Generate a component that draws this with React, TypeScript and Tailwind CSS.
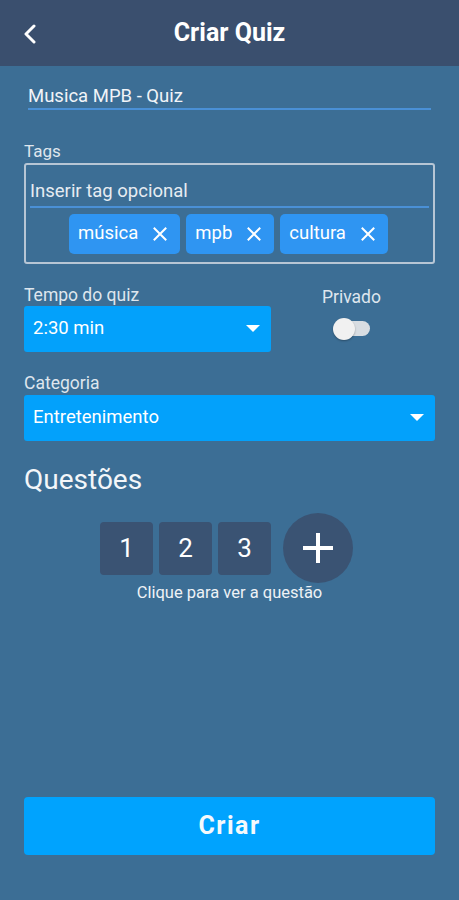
import React from "react";

function Chip({ label }: { label: string }) {
  return (
    <div className="flex h-[40px] items-center gap-[15px] rounded-[5px] bg-[#2f95f2] pl-[9px] pr-[13px] text-[18.5px] text-white">
      <span>{label}</span>
      <svg width="14" height="14" viewBox="0 0 14 14" fill="none" stroke="white" strokeWidth="2" strokeLinecap="square">
        <path d="M1.5 1.5 L12.5 12.5 M12.5 1.5 L1.5 12.5" />
      </svg>
    </div>
  );
}

function Caret() {
  return (
    <svg width="14" height="8" viewBox="0 0 14 8">
      <path d="M0 0 L14 0 L7 7 Z" fill="white" />
    </svg>
  );
}

export default function App() {
  return (
    <div className="flex min-h-[900px] w-[459px] flex-col bg-[#3c6e95] font-['Roboto',sans-serif] text-white">
      <header className="relative flex h-[66px] items-center justify-center bg-[#3a4f6e]">
        <svg className="absolute left-[23px] top-[24px]" width="14" height="20" viewBox="0 0 14 20" fill="none" stroke="white" strokeWidth="3" strokeLinecap="round" strokeLinejoin="round">
          <path d="M11 2 L3 10 L11 18" />
        </svg>
        <h1 className="text-[25px] font-bold">Criar Quiz</h1>
      </header>

      <div className="flex flex-1 flex-col px-[24px]">
        <div className="mx-[4px] mt-[19px] border-b-2 border-[#4a90d6] pb-[1px] text-[18.5px] leading-[22px] text-[#f1f4f8]">
          Musica MPB - Quiz
        </div>

        <div className="mt-[31px] text-[17px] leading-[20px] text-[#dfe6ee]">Tags</div>
        <div className="mt-[2px] h-[101px] rounded-[3px] border-2 border-[#b7c6d5] px-[4px]">
          <div className="mt-[14px] border-b-2 border-[#4a90d6] pb-[3px] text-[18.5px] leading-[24px] text-[#e6ecf2]">
            Inserir tag opcional
          </div>
          <div className="mt-[6px] flex justify-center gap-[6px] pr-[2px]">
            <Chip label="música" />
            <Chip label="mpb" />
            <Chip label="cultura" />
          </div>
        </div>

        <div className="mt-[21px] flex">
          <div className="flex w-[247px] flex-col">
            <div className="text-[17.5px] leading-[20px] text-[#dfe6ee]">Tempo do quiz</div>
            <div className="mt-[1px] flex h-[46px] items-center justify-between rounded-[3px] bg-[#03a1fb] pl-[9px] pr-[11px] text-[18.5px]">
              <span>2:30 min</span>
              <Caret />
            </div>
          </div>
          <div className="ml-[51px] flex flex-col items-center">
            <div className="mt-[2px] text-[17.5px] leading-[20px] text-[#dfe6ee]">Privado</div>
            <div className="relative mt-[11px] h-[22px] w-[37px]">
              <div className="absolute left-[2px] top-[3px] h-[15px] w-[35px] rounded-full bg-[#d8dde2]" />
              <div className="absolute left-0 top-0 h-[22px] w-[22px] rounded-full bg-[#f1f1f1] shadow-[0_1px_2px_rgba(0,0,0,0.3)]" />
            </div>
          </div>
        </div>

        <div className="mt-[21px] text-[17.5px] leading-[20px] text-[#dfe6ee]">Categoria</div>
        <div className="mt-[2px] flex h-[46px] items-center justify-between rounded-[3px] bg-[#03a1fb] pl-[9px] pr-[11px] text-[18.5px]">
          <span>Entretenimento</span>
          <Caret />
        </div>

        <h2 className="mt-[23px] text-[28px] leading-[32px] text-[#f3f6f9]">Questões</h2>

        <div className="mt-[17px] flex items-center justify-center gap-[6px] pr-[6px]">
          {["1", "2", "3"].map((n) => (
            <div key={n} className="flex h-[53px] w-[53px] items-center justify-center rounded-[4px] bg-[#3a5373] text-[26px] text-white">
              {n}
            </div>
          ))}
          <div className="ml-[6px] flex h-[70px] w-[70px] items-center justify-center rounded-full bg-[#3a5373]">
            <svg width="34" height="34" viewBox="0 0 34 34" stroke="white" strokeWidth="4">
              <path d="M17 2 V32 M2 17 H32" />
            </svg>
          </div>
        </div>
        <div className="text-center text-[16.5px] leading-[20px] text-[#eef2f6]">Clique para ver a questão</div>

        <div className="flex-1" />

        <button className="mb-[45px] flex h-[58px] items-center justify-center rounded-[4px] bg-[#00a3fe] text-[25px] font-bold tracking-[1.5px] text-[#f5f9fc]">
          Criar
        </button>
      </div>
    </div>
  );
}
